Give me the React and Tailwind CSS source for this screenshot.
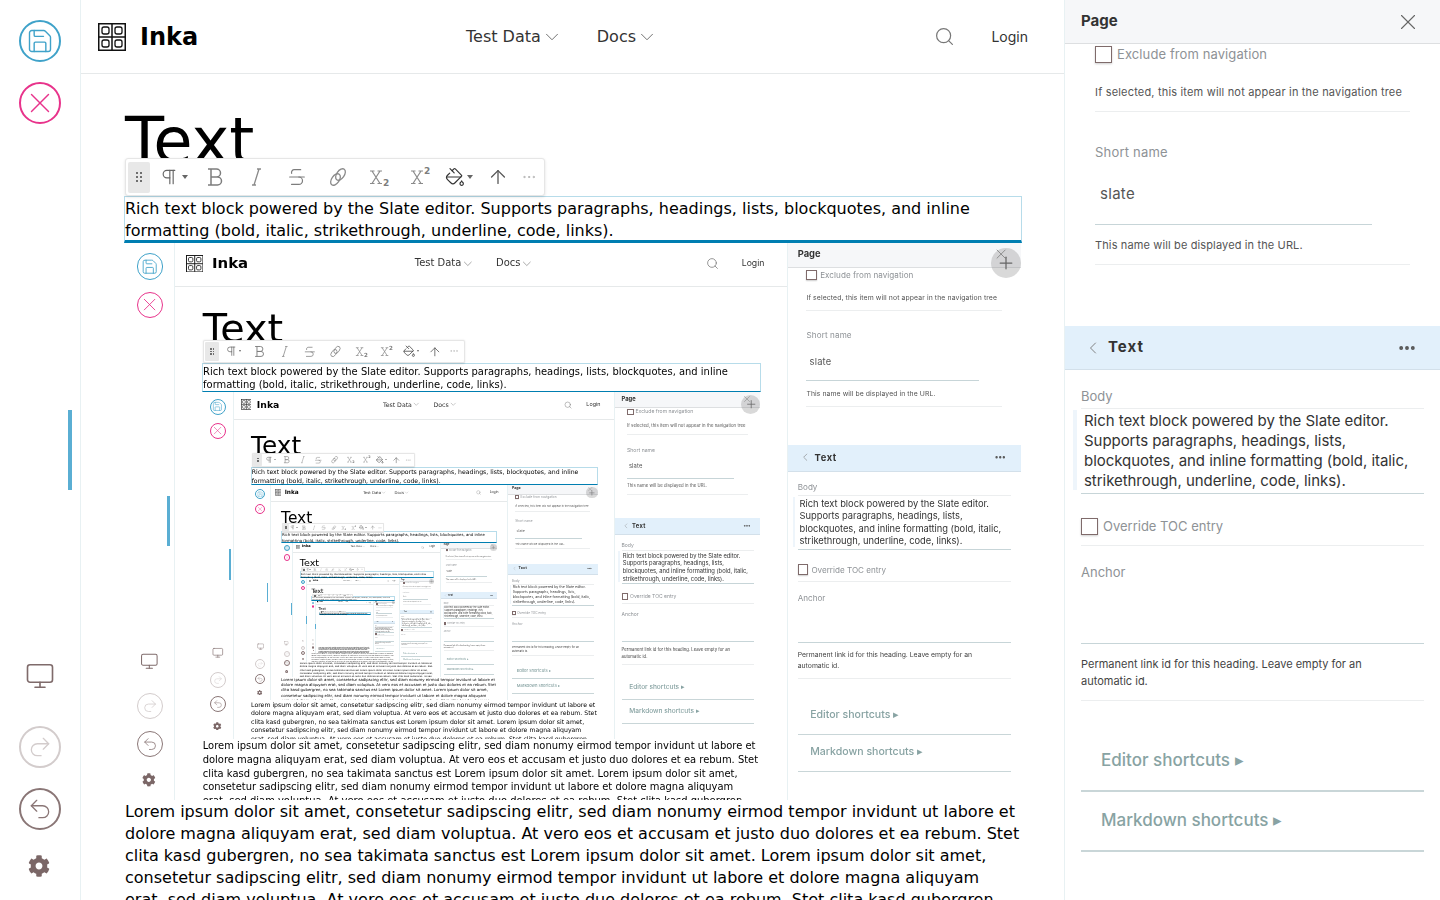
import { ArrowUp, ChevronDown, ChevronLeft, Ellipsis, Monitor, PaintBucket, Pilcrow, Plus, Redo2, Save, Search, Strikethrough, Undo2, X } from 'lucide-react';
import { FaCog } from 'react-icons/fa';

const MAX_DEPTH = 6;

const LOREM = 'Lorem ipsum dolor sit amet, consetetur sadipscing elitr, sed diam nonumy eirmod tempor invidunt ut labore et dolore magna aliquyam erat, sed diam voluptua. At vero eos et accusam et justo duo dolores et ea rebum. Stet clita kasd gubergren, no sea takimata sanctus est Lorem ipsum dolor sit amet. Lorem ipsum dolor sit amet, consetetur sadipscing elitr, sed diam nonumy eirmod tempor invidunt ut labore et dolore magna aliquyam erat, sed diam voluptua. At vero eos et accusam et justo duo dolores et ea rebum. Stet clita kasd gubergren, no sea takimata sanctus est Lorem ipsum dolor sit amet.';

const BODY = 'Rich text block powered by the Slate editor. Supports paragraphs, headings, lists, blockquotes, and inline formatting (bold, italic, strikethrough, underline, code, links).';

const CircleButton = ({ className, children }) => (
    <div className={`flex h-[42px] w-[42px] items-center justify-center rounded-full border-2 ${className}`}>
        {children}
    </div>
);

const ToolColumn = () => (
    <div className="flex w-[81px] flex-none flex-col items-center border-r border-[#e8f1f3] pt-[20px] pb-[23px]">
        <CircleButton className="border-[#3fa2c9] text-[#3fa2c9]">
            <Save size={28} strokeWidth={1.2} />
        </CircleButton>
        <CircleButton className="mt-[20px] border-[#e8338b] text-[#e8338b]">
            <X size={34} strokeWidth={1} />
        </CircleButton>
        <Monitor className="mt-auto text-[#7f6b6b]" size={30} strokeWidth={1.3} />
        <CircleButton className="mt-[35px] border-[#d3cccc] text-[#d3cccc]">
            <Redo2 size={26} strokeWidth={1.2} />
        </CircleButton>
        <CircleButton className="mt-[20px] border-[#8a7676] text-[#8a7676]">
            <Undo2 size={26} strokeWidth={1.2} />
        </CircleButton>
        <FaCog className="mt-[25px] -ml-[2px] text-[#7b6767]" size={22} />
    </div>
);

const Logo = () => (
    <svg width="28" height="28" viewBox="0 0 28 28" fill="none" stroke="#111">
        <rect x="0.75" y="0.75" width="26.5" height="26.5" strokeWidth="1.5" />
        <path d="M14 1v26M1 14h26" strokeWidth="1.5" />
        <rect x="4" y="4" width="7" height="7" rx="2" strokeWidth="1.3" />
        <rect x="17" y="4" width="7" height="7" rx="2" strokeWidth="1.3" />
        <rect x="4" y="17" width="7" height="7" rx="2" strokeWidth="1.3" />
        <rect x="17" y="17" width="7" height="7" rx="2" strokeWidth="1.3" />
    </svg>
);

const Header = () => (
    <header className="flex h-[74px] flex-none items-center border-b border-[#e6e9ea] pr-[36px] pl-[17px]">
        <div className="flex w-[368px] items-center gap-[14px]">
            <Logo />
            <span className="text-[24px] font-bold text-black">Inka</span>
        </div>
        <div className="flex items-center text-[16px] text-[#333]">
            <span>Test Data</span>
            <ChevronDown className="text-[#666]" size={22} strokeWidth={1} />
            <span className="ml-[34px]">Docs</span>
            <ChevronDown className="text-[#666]" size={22} strokeWidth={1} />
        </div>
        <Search className="ml-auto text-[#777]" size={21} strokeWidth={1.4} />
        <span className="-mt-[1px] ml-[36px] font-['Inter',sans-serif] text-[14px] text-[#333]">Login</span>
    </header>
);

const BoldIcon = () => (
    <svg width="24" height="24" viewBox="0 0 24 24" fill="none" stroke="#7d7d7d" strokeWidth="1.5">
        <path d="M5 4h8.5a4 4 0 0 1 0 8H8M8 12h6.5a4 4 0 0 1 0 8H5M8 4v16" />
    </svg>
);

const ItalicIcon = () => (
    <svg width="24" height="24" viewBox="0 0 24 24" fill="none" stroke="#8a8a8a" strokeWidth="1.3">
        <path d="M15 4l-5 16M13 4h4M8 20h4" />
    </svg>
);

const LinkIcon = () => (
    <svg width="24" height="24" viewBox="0 0 24 24" fill="none" stroke="#8a8a8a" strokeWidth="1.3">
        <ellipse cx="9.5" cy="14.5" rx="6.5" ry="3.8" transform="rotate(-55 9.5 14.5)" />
        <ellipse cx="14.5" cy="9.5" rx="6.5" ry="3.8" transform="rotate(-55 14.5 9.5)" />
    </svg>
);

const ScriptIcon = ({ digit, digitY }) => (
    <svg width="24" height="24" viewBox="0 0 24 24" fill="none" stroke="#8a8a8a" strokeWidth="1.2">
        <path d="M5 6l8 12.5M13 6L5 18.5M3 6h4.5M10.5 6H15M3 18.5h4.5M10.5 18.5H15" />
        <text x="16" y={digitY} fontSize="9" fontWeight="700" fill="#7d7d7d" stroke="none">{digit}</text>
    </svg>
);

const BlockToolbar = () => (
    <div className="absolute -top-[39px] left-0 z-10 flex h-[38px] items-center rounded-[3px] border border-[#e6e6e6] bg-white pr-[4px] pl-[2px] shadow-[0_1px_3px_rgba(0,0,0,0.12)]">
        <div className="flex h-[31px] w-[22px] items-center justify-center rounded-[2px] bg-[#e8e8e8]">
            <div className="grid grid-cols-2 gap-[2px]">
                {[0, 1, 2, 3, 4, 5].map((n) => (
                    <span key={n} className="h-[2px] w-[2px] bg-[#6f6f6f]" />
                ))}
            </div>
        </div>
        <div className="flex w-[44px] items-center justify-center gap-[3px] pl-[2px] text-[#666]">
            <Pilcrow size={20} strokeWidth={1.4} />
            <span className="h-0 w-0 border-x-[3px] border-t-[4px] border-x-transparent border-t-[#666]" />
        </div>
        <div className="flex w-[41px] justify-center"><BoldIcon /></div>
        <div className="flex w-[41px] justify-center"><ItalicIcon /></div>
        <div className="flex w-[41px] justify-center text-[#7d7d7d]"><Strikethrough size={22} strokeWidth={1.3} /></div>
        <div className="flex w-[41px] justify-center"><LinkIcon /></div>
        <div className="flex w-[41px] justify-center"><ScriptIcon digit="2" digitY="21" /></div>
        <div className="flex w-[41px] justify-center"><ScriptIcon digit="2" digitY="9" /></div>
        <div className="flex w-[38px] items-center justify-center gap-[2px] text-[#333]">
            <PaintBucket size={20} strokeWidth={1.4} />
            <span className="h-0 w-0 border-x-[3px] border-t-[4px] border-x-transparent border-t-[#666]" />
        </div>
        <div className="flex w-[39px] justify-center text-[#555]"><ArrowUp size={22} strokeWidth={1.4} /></div>
        <div className="flex w-[23px] justify-center text-[#aaa]"><Ellipsis size={16} strokeWidth={1.2} /></div>
    </div>
);

const Checkbox = () => (
    <span className="h-[17px] w-[17px] flex-none border border-[#7f6b6b] bg-white shadow-[0_1px_2px_rgba(0,0,0,0.2)]" />
);

const Sidebar = () => (
    <aside className="w-[376px] flex-none overflow-hidden border-l border-[#e8f1f3] bg-white font-['Inter',sans-serif]">
        <div className="flex h-[44px] items-center justify-between border-b border-[#dddfe1] bg-[#f6f7f9] pr-[19px] pl-[16px]">
            <span className="text-[15px] font-bold text-[#333]">Page</span>
            <X className="text-[#666]" size={26} strokeWidth={1} />
        </div>

        <div className="mr-[30px] ml-[30px]">
            <div className="flex h-[20px] items-center gap-[5px] pt-[1px] text-[13px] tracking-[0.1px] text-[#8e9296]">
                <Checkbox />
                <span>Exclude from navigation</span>
            </div>
            <div className="border-b border-[#eceeef] pt-[20px] pb-[10px] text-[11px] leading-[17px] tracking-[0.18px] whitespace-nowrap text-[#555]">
                If selected, this item will not appear in the navigation tree
            </div>
            <div className="mt-[31px] text-[13px] leading-[18px] tracking-[0.2px] text-[#8e9296]">Short name</div>
            <div className="h-[64px] w-[277px] border-b border-[#c7d5d8] pt-[22px] pl-[5px] text-[15px] leading-[22px] tracking-[0.3px] text-[#555]">slate</div>
            <div className="border-b border-[#eceeef] pt-[12px] pb-[10px] text-[11px] leading-[17px] tracking-[0.13px] text-[#555]">
                This name will be displayed in the URL.
            </div>
        </div>

        <div className="mt-[61px] flex h-[44px] items-center justify-between border-b border-[#d3e0ea] bg-[#e2f0fb] pr-[23px] pl-[18px]">
            <div className="flex items-center gap-[5px]">
                <ChevronLeft className="text-[#777]" size={20} strokeWidth={1.1} />
                <span className="text-[15px] font-bold tracking-[1px] text-[#333]">Text</span>
            </div>
            <Ellipsis className="text-[#555]" size={20} strokeWidth={2.6} />
        </div>

        <div className="mx-[16px]">
            <div className="pt-[17px] text-[13px] leading-[18px] text-[#8e9296]">Body</div>
            <div className="relative mt-[3px] border-y border-t-[#eceeef] border-b-[#c7d5d8] pt-[2px] pb-[2px] pl-[3px] text-[15px] leading-[20px] tracking-[-0.05px] text-[#333]">
                <span className="absolute top-[1px] -left-[8px] h-[80px] w-[4px] bg-[#eef5fb]" />
                {BODY}
            </div>
            <div className="flex h-[52px] items-center gap-[5px] border-b border-[#eceeef] pt-[14px] text-[13px] text-[#8e9296]">
                <Checkbox />
                <span>Override TOC entry</span>
            </div>
            <div className="mt-[17px] text-[13px] leading-[18px] text-[#8e9296]">Anchor</div>
            <div className="h-[63px] border-b border-[#c7d5d8]" />
            <div className="border-b border-[#eceeef] pt-[12px] pr-[50px] pb-[10px] text-[11px] leading-[17px] text-[#444]">
                Permanent link id for this heading. Leave empty for an automatic id.
            </div>
            <div className="border-b-2 border-[#c9d6d8] pt-[47px] pb-[18px] pl-[20px] text-[17px] leading-[24px] font-medium text-[#88a3a3]">
                Editor shortcuts ▸
            </div>
            <div className="border-b-2 border-[#c9d6d8] pt-[16px] pb-[18px] pl-[20px] text-[17px] leading-[24px] font-medium text-[#88a3a3]">
                Markdown shortcuts ▸
            </div>
        </div>
    </aside>
);

const Screen = ({ depth }) => (
    <div className="relative flex h-[900px] w-[1440px] overflow-hidden bg-white font-['DejaVu_Sans',sans-serif]">
        <ToolColumn />
        <span className="absolute top-[410px] left-[68px] h-[80px] w-[4px] bg-[#5aaed3]" />

        <main className="flex min-w-0 flex-1 flex-col">
            <Header />
            <div className="pr-[42px] pl-[43px]">
                <h1 className="h-[122px] pt-[32px] pl-[1px] text-[64px] leading-[70px] font-normal text-black">Text</h1>

                <div className="relative z-10 h-[47px] border border-b-[3px] border-[#b7dcea] border-b-[#007eb1] pt-[1px] text-[16px] leading-[22px] text-black">
                    <BlockToolbar />
                    {BODY}
                </div>

                <div className="-mt-[2px] h-[559px] overflow-hidden pl-[1px]">
                    {depth < MAX_DEPTH && (
                        <div className="blur-[0.3px] [zoom:0.622]">
                            <Screen depth={depth + 1} />
                        </div>
                    )}
                </div>

                <p className="pt-[1px] pr-[2px] pl-[1px] text-[16px] leading-[22px] text-black">{LOREM}</p>
            </div>
        </main>

        <Sidebar />

        {/* Add block button, drawn over the embedded copy of the page */}
        {depth < MAX_DEPTH && (
            <div className="absolute top-[248px] left-[991px] z-10 flex h-[30px] w-[30px] items-center justify-center rounded-full bg-[#808080]/30 text-[#666]">
                <Plus size={20} strokeWidth={1.5} />
            </div>
        )}
    </div>
);

const App = () => <Screen depth={0} />;

export default App;
